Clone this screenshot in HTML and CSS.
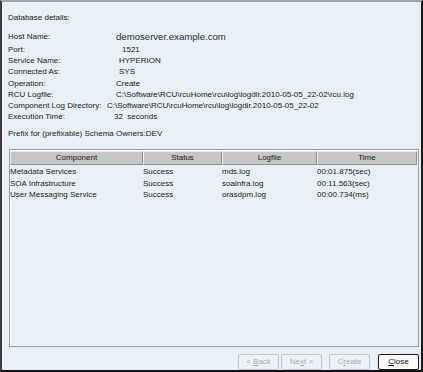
FILE: index.html
```html
<!DOCTYPE html>
<html>
<head>
<meta charset="utf-8">
<link rel="stylesheet" href="styles.css">
</head>
<body>
<div class="frame">
  <div class="title">Database details:</div>
  <div class="details">
    <div class="lbl">Host Name:</div><div class="val host">demoserver.example.com</div>
    <div class="lbl">Port:</div><div class="val v-port">1521</div>
    <div class="lbl">Service Name:</div><div class="val v-svc">HYPERION</div>
    <div class="lbl">Connected As:</div><div class="val v-svc">SYS</div>
    <div class="lbl">Operation:</div><div class="val">Create</div>
    <div class="lbl">RCU Logfile:</div><div class="val">C:\Software\RCU\rcuHome\rcu\log\logdir.2010-05-05_22-02\rcu.log</div>
    <div class="lbl">Component Log Directory:</div><div class="val v-dir">C:\Software\RCU\rcuHome\rcu\log\logdir.2010-05-05_22-02</div>
    <div class="lbl">Execution Time:</div><div class="val v-exec">32&nbsp; seconds</div>
  </div>
  <div class="prefix">Prefix for (prefixable) Schema Owners:DEV</div>
  <div class="table">
    <div class="thead">
      <div class="th c1">Component</div>
      <div class="th c2">Status</div>
      <div class="th c3">Logfile</div>
      <div class="th c4">Time</div>
    </div>
    <div class="tr">
      <div class="td c1">Metadata Services</div>
      <div class="td c2">Success</div>
      <div class="td c3">mds.log</div>
      <div class="td c4">00:01.875(sec)</div>
    </div>
    <div class="tr">
      <div class="td c1">SOA Infrastructure</div>
      <div class="td c2">Success</div>
      <div class="td c3">soainfra.log</div>
      <div class="td c4">00:11.563(sec)</div>
    </div>
    <div class="tr">
      <div class="td c1">User Messaging Service</div>
      <div class="td c2">Success</div>
      <div class="td c3">orasdpm.log</div>
      <div class="td c4">00:00.734(ms)</div>
    </div>
  </div>
  <div class="buttons">
    <div class="btn disabled">&lt; <u>B</u>ack</div>
    <div class="btn disabled">Ne<u>x</u>t &gt;</div>
    <div class="btn disabled gap">C<u>r</u>eate</div>
    <div class="btn default gap"><u>C</u>lose</div>
  </div>
</div>
</body>
</html>
```

FILE: styles.css
```css
html, body {
  margin: 0;
  padding: 0;
  background: #ffffff;
}
.frame {
  box-sizing: border-box;
  width: 423px;
  height: 372px;
  background: #e9eff7;
  border-top: 2px solid #9fa4aa;
  border-left: 2px solid #3a3a3a;
  border-right: 2px solid #1a1a1a;
  border-bottom: 2px solid #111111;
  padding: 10px 2px 0 6px;
  font-family: "Liberation Sans", Arial, sans-serif;
  font-size: 8px;
  color: #1a1a1a;
  display: flex;
  flex-direction: column;
  overflow: hidden;
}
.title {
  height: 11px;
  line-height: 11px;
}
.details {
  margin-top: 8px;
  display: grid;
  grid-template-columns: 100px 1fr;
  grid-template-rows: 13px;
  grid-auto-rows: 11.2px;
  line-height: 11px;
  white-space: nowrap;
}
.val {
  padding-left: 8px;
}
.val.host {
  font-size: 9.6px;
  line-height: 12px;
  color: #1f2a3d;
  padding-left: 8px;
}
.val.v-port { padding-left: 14px; }
.val.v-svc { padding-left: 11px; }
.val.v-dir { padding-left: 0; margin-left: -1px; }
.val.v-exec { padding-left: 6px; }
.prefix {
  margin-top: 6px;
  height: 11px;
  line-height: 11px;
}
.table {
  box-sizing: border-box;
  margin-top: 10px;
  margin-left: 1px;
  width: 410px;
  height: 199px;
  border: 1px solid #9a9ea4;
  box-shadow: inset 1px 1px 0 #ffffff;
  background: #e9eff7;
  padding: 1px 1px 0 0;
}
.thead {
  display: flex;
  height: 14px;
  margin-bottom: 1px;
}
.th {
  box-sizing: border-box;
  background: #c6c6c6;
  border-top: 1px solid #ececec;
  border-left: 1px solid #ececec;
  border-right: 1px solid #8e8e8e;
  border-bottom: 1px solid #8e8e8e;
  text-align: center;
  line-height: 12px;
}
.c1 { width: 133px; }
.c2 { width: 79px; }
.c3 { width: 95px; }
.c4 { flex: 1; }
.tr {
  display: flex;
  height: 11.4px;
  line-height: 11.4px;
  white-space: nowrap;
}
.td {
  box-sizing: border-box;
  padding-left: 0;
  overflow: hidden;
}
.buttons {
  display: flex;
  justify-content: flex-end;
  margin-top: 7px;
  gap: 2px;
  padding-right: 0;
}
.btn {
  box-sizing: border-box;
  width: 41px;
  height: 16px;
  line-height: 14px;
  text-align: center;
  border: 1px solid #c2c8d0;
  border-radius: 2px;
  background: #edf1f6;
  color: #a8adb4;
}
.btn.gap {
  margin-left: 5px;
}
.btn.default {
  border: 1px solid #1f1f1f;
  background: #fbfbfb;
  color: #111111;
  margin-left: 6px;
}
u {
  text-decoration: underline;
}
```
